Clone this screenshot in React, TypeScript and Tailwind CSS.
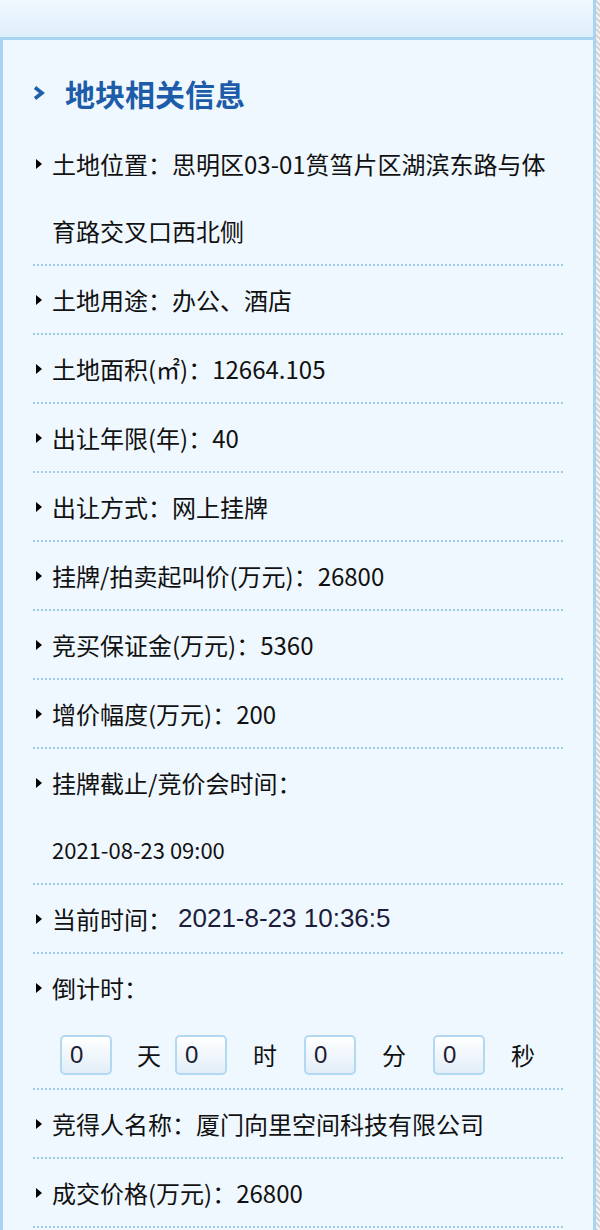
import React from "react";

const CJK = "font-['SimSun','Noto_Sans_CJK_SC',sans-serif]";

function Bullet() {
  return (
    <div className="w-[19px] h-[67px] flex items-center shrink-0">
      <span className="ml-[3px] w-0 h-0 border-l-[6px] border-l-black border-y-[5px] border-y-transparent" />
    </div>
  );
}

function Row({ children, second }: { children: React.ReactNode; second?: React.ReactNode }) {
  return (
    <div className="flex border-b-2 border-dotted border-[#9ccbe6]">
      <Bullet />
      <div className="flex-1">
        <div className="h-[67px] flex items-center whitespace-nowrap">{children}</div>
        {second !== undefined && <div className="h-[67px] flex items-center whitespace-nowrap">{second}</div>}
      </div>
    </div>
  );
}

function Box() {
  return (
    <div className="w-[52px] h-[40px] rounded-[5px] border-2 border-[#b3d8f2] bg-gradient-to-b from-white to-[#e2eef8] flex items-center pl-[8px] font-['Liberation_Sans',sans-serif] text-[24px] text-[#202030]">
      0
    </div>
  );
}

export default function App() {
  return (
    <div className={`w-[600px] h-[1230px] flex overflow-hidden ${CJK} text-[24px] text-[#111]`}>
      <div className="w-[596px] flex flex-col border-r-[3px] border-[#a9d3f2]">
        <div className="h-[40px] bg-gradient-to-b from-[#f0f8fe] to-[#deeefb] border-b-[3px] border-[#a9d3f2] shrink-0" />
        <div className="flex-1 bg-[#f0f8ff] border-l-[3px] border-[#a9d3f2]">
          <div className="ml-[27px] pt-[33px] h-[90px] flex items-start">
            <div className="h-[40px] flex items-center">
              <svg width="12" height="14" viewBox="0 0 12 14" className="ml-[3px]">
                <polyline points="2,1.5 9,7 2,12.5" fill="none" stroke="#1f5fab" strokeWidth="3.6" />
              </svg>
              <span className="ml-[20px] text-[30px] font-bold text-[#1d5ca9] leading-[40px]">地块相关信息</span>
            </div>
          </div>
          <div className="ml-[30px] w-[530px]">
            <Row second={<span>育路交叉口西北侧</span>}>土地位置：思明区03-01筼筜片区湖滨东路与体</Row>
            <Row>土地用途：办公、酒店</Row>
            <Row>土地面积(㎡)：12664.105</Row>
            <Row>出让年限(年)：40</Row>
            <Row>出让方式：网上挂牌</Row>
            <Row>挂牌/拍卖起叫价(万元)：26800</Row>
            <Row>竞买保证金(万元)：5360</Row>
            <Row>增价幅度(万元)：200</Row>
            <Row second={<span className="text-[22px]">2021-08-23 09:00</span>}>挂牌截止/竞价会时间：</Row>
            <Row>
              当前时间：
              <span className="ml-[6px] font-['Liberation_Sans',sans-serif] text-[26px] text-[#1c1c3c]">2021-8-23 10:36:5</span>
            </Row>
            <Row
              second={
                <div className="flex items-center ml-[8px]">
                  <Box />
                  <span className="ml-[25px] mr-[14px]">天</span>
                  <Box />
                  <span className="ml-[26px] mr-[27px]">时</span>
                  <Box />
                  <span className="ml-[26px] mr-[27px]">分</span>
                  <Box />
                  <span className="ml-[26px]">秒</span>
                </div>
              }
            >
              倒计时：
            </Row>
            <Row>竞得人名称：厦门向里空间科技有限公司</Row>
            <Row>成交价格(万元)：26800</Row>
          </div>
        </div>
      </div>
      <div className="w-[4px] bg-[repeating-linear-gradient(45deg,#d8d4d0_0px,#d8d4d0_2px,#f4f2f0_2px,#f4f2f0_4px)]" />
    </div>
  );
}
